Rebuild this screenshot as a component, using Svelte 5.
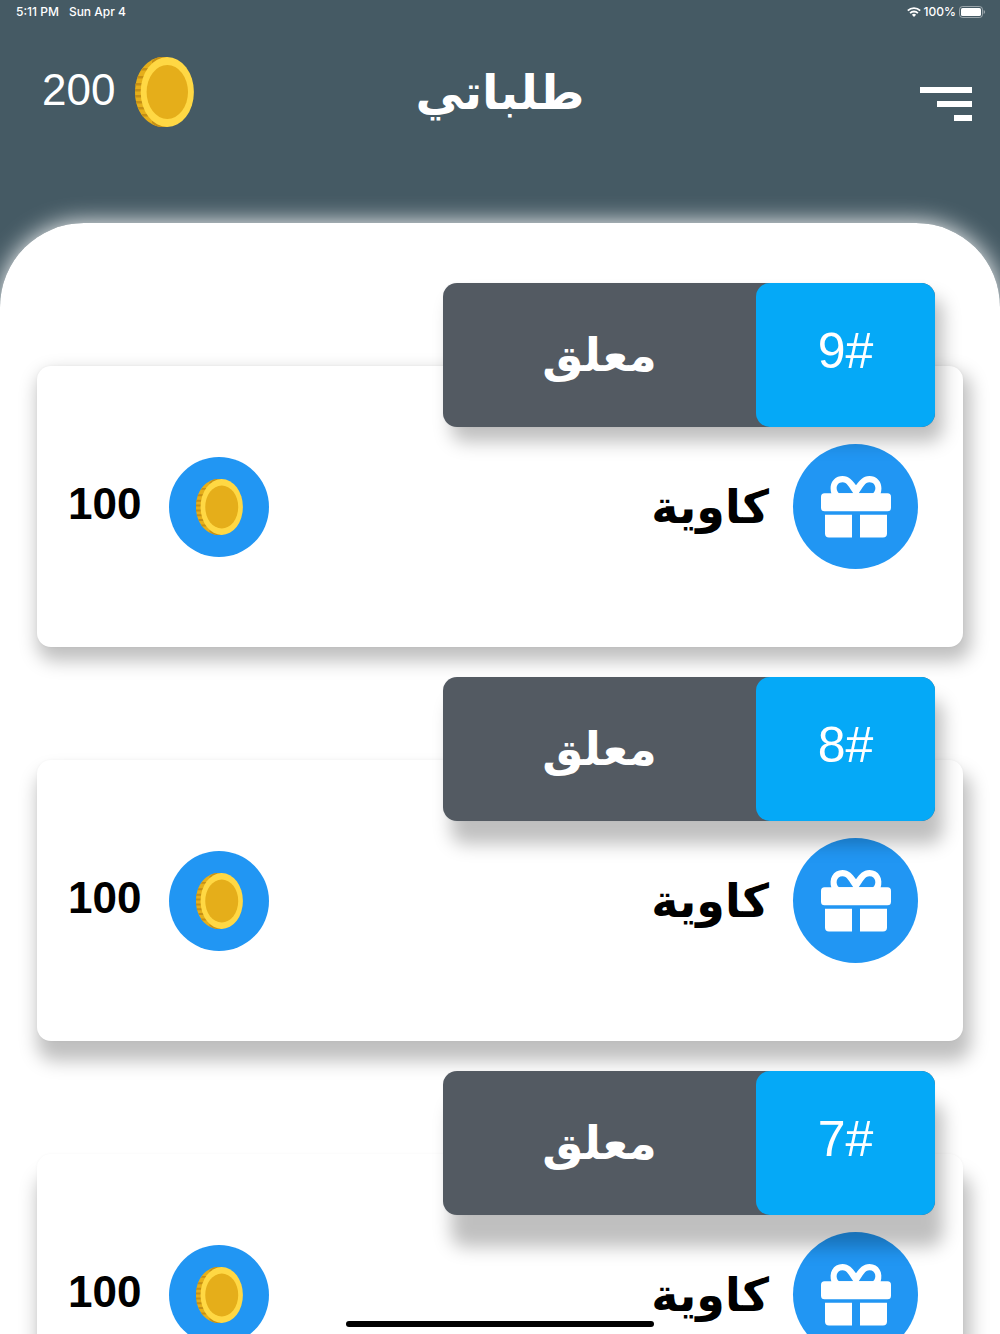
<script>
  const balance = 200;
  const orders = [
    { id: 9, status: 'معلق', item: 'كاوية', price: 100, lift: 'low' },
    { id: 8, status: 'معلق', item: 'كاوية', price: 100, lift: 'mid' },
    { id: 7, status: 'معلق', item: 'كاوية', price: 100, lift: 'high' }
  ];
</script>

{#snippet coin()}
  <svg class="coin" viewBox="0 0 59 70" aria-hidden="true">
    <path d="M32 0H26C11 2 0 16 0 35s11 33 26 35h6z" fill="#e5ae1a" />
    <path
      d="M17 4Q21 0 26 0H32L17 8zM17 66Q21 70 26 70H32L17 62zM8 11H15V13.500H6zM3 19H11V21.500H2zM1 26H8V28.500H0zM0 32H7V34.500H0zM0 38H7V40.500H0zM1 44H8V46.500H1zM3 50H11V52.500H4zM6 57H15V59.500H8z"
      fill="#c68f15"
    />
    <ellipse cx="32.300" cy="35" rx="26.600" ry="35" fill="#ffd844" />
    <ellipse cx="32.300" cy="35" rx="20.700" ry="27" fill="#e5ae1a" />
  </svg>
{/snippet}

<div class="app">
  <header>
    <div class="status-bar">
      <div class="group when"><span>5:11 PM</span><span>Sun Apr 4</span></div>
      <div class="group">
        <svg class="wifi" viewBox="0 0 14 10" aria-hidden="true">
          <g fill="none" stroke="#fff" stroke-width="1.800">
            <path d="M.8 3.700A8.800 8.800 0 0 1 13.200 3.700" />
            <path d="M3.100 6.100A5.500 5.500 0 0 1 10.900 6.100" />
          </g>
          <path d="M7 10 4.900 7.800A3 3 0 0 1 9.100 7.800z" fill="#fff" />
        </svg>
        <span>100%</span>
        <svg class="battery" viewBox="0 0 26 12" aria-hidden="true">
          <rect x=".5" y=".5" width="23" height="11" rx="3" fill="none" stroke="#fff" stroke-opacity=".45" />
          <rect x="2" y="2" width="20" height="8" rx="1.600" fill="#fff" />
          <path d="M24.700 4v4q1.300-.6 1.300-2t-1.300-2" fill="#fff" fill-opacity=".5" />
        </svg>
      </div>
    </div>
    <div class="title-bar">
      <div class="balance"><span>{balance}</span>{@render coin()}</div>
      <h1 lang="ar" dir="rtl">طلباتي</h1>
      <button class="menu" aria-label="القائمة"><i></i><i></i><i></i></button>
    </div>
  </header>

  <main>
    <ul>
      {#each orders as order (order.id)}
        <li class={order.lift}>
          <div class="tag">
            <span class="state" lang="ar" dir="rtl">{order.status}</span>
            <span class="number">{order.id}#</span>
          </div>
          <article>
            <div class="price">
              <span>{order.price}</span>
              <div class="disc small">{@render coin()}</div>
            </div>
            <div class="item">
              <span lang="ar" dir="rtl">{order.item}</span>
              <div class="disc large">
                <svg class="gift" viewBox="0 0 70 62" fill="#fff" aria-hidden="true">
                  <path
                    fill-rule="evenodd"
                    d="M10.500 18C7.500 9 12 0 21.500 0C28 0 31.500 4.500 35 9.300C38.500 4.500 42 0 48.500 0C58 0 62.500 9 59.500 18zM18 17.300H32.300C28 11 26 6.200 21.500 6.200C15 6.200 14 14 18 17.300zM52 17.300H37.700C42 11 44 6.200 48.500 6.200C55 6.200 56 14 52 17.300z"
                  />
                  <rect y="17.300" width="70" height="18" rx="3.500" />
                  <path d="M4 38.700H31V61.500H8Q4 61.500 4 57.500zM39 38.700H66V57.500Q66 61.500 62 61.500H39z" />
                </svg>
              </div>
            </div>
          </article>
        </li>
      {/each}
    </ul>
  </main>
  <div class="home-indicator"></div>
</div>

<style>
  :global(body) {
    margin: 0;
    background: #455a64;
  }
  .app {
    position: relative;
    display: flex;
    flex-direction: column;
    height: 100vh;
    overflow: hidden;
    background: #455a64;
    color: #fff;
    font-family: 'Liberation Sans', 'DejaVu Sans', sans-serif;
  }
  .status-bar {
    display: flex;
    justify-content: space-between;
    align-items: center;
    height: 24px;
    padding: 0 15px 0 16px;
    font: 500 12px/24px Inter, sans-serif;
  }
  .group {
    display: flex;
    align-items: center;
    gap: 3px;
  }
  .when {
    gap: 10px;
  }
  .wifi {
    width: 14px;
    height: 10px;
  }
  .battery {
    width: 26px;
    height: 12px;
  }
  .title-bar {
    display: grid;
    grid-template-columns: 1fr auto 1fr;
    align-items: center;
    height: 136px;
    padding: 0 28px 63px;
  }
  .balance {
    display: flex;
    align-items: center;
    gap: 20px;
    padding-left: 14px;
    font-size: 44px;
    line-height: 56px;
  }
  .balance span {
    padding-bottom: 4px;
  }
  .balance .coin {
    width: 59px;
    height: 70px;
  }
  h1 {
    margin: 0;
    font: bold 48px/72px 'DejaVu Sans', sans-serif;
  }
  .menu {
    display: flex;
    flex-direction: column;
    align-items: flex-end;
    justify-self: end;
    gap: 8px;
    margin-top: 24px;
    padding: 0;
    border: 0;
    background: none;
  }
  .menu i {
    width: 52px;
    height: 6px;
    background: #fff;
  }
  .menu i:nth-child(2) {
    width: 35px;
  }
  .menu i:nth-child(3) {
    width: 18px;
  }
  main {
    flex: 1;
    min-height: 0;
    overflow-y: auto;
    scrollbar-width: none;
    border-radius: 84px 84px 0 0;
    background: #fff;
    box-shadow: 0 0 24px #fff;
  }
  ul {
    display: flex;
    flex-direction: column;
    gap: 30px;
    margin: 0;
    padding: 60px 37px 30px;
    list-style: none;
  }
  li {
    display: flex;
    flex-direction: column;
  }
  .low {
    --card-drop: 10px;
    --tag-drop: 15px;
  }
  .mid {
    --card-drop: 16px;
    --tag-drop: 23px;
  }
  .high {
    --card-drop: 24px;
    --tag-drop: 32px;
  }
  .tag {
    position: relative;
    z-index: 1;
    display: flex;
    align-self: flex-end;
    width: 492px;
    height: 144px;
    margin: 0 28px -61px 0;
    border-radius: 14px;
    background: #535a62;
    box-shadow: 8px var(--tag-drop) 18px rgba(0, 0, 0, 0.25), 0 0 3px rgba(0, 0, 0, 0.04);
  }
  .state,
  .number {
    display: flex;
    align-items: center;
    justify-content: center;
  }
  .state {
    flex: 1;
    font: bold 46px/60px 'DejaVu Sans', sans-serif;
  }
  .number {
    width: 179px;
    padding-bottom: 8px;
    box-sizing: border-box;
    border-radius: 14px;
    background: #05a9f7;
    font-size: 50px;
  }
  article {
    display: flex;
    align-items: center;
    justify-content: space-between;
    box-sizing: border-box;
    height: 281px;
    padding: 0 45px 0 31px;
    border-radius: 14px;
    background: #fff;
    box-shadow: 4px var(--card-drop) 18px 4px rgba(0, 0, 0, 0.25), 0 0 3px rgba(0, 0, 0, 0.04);
    color: #000;
  }
  .price,
  .item {
    display: flex;
    align-items: center;
    font-weight: bold;
    font-size: 44px;
    line-height: 60px;
  }
  .price {
    gap: 28px;
  }
  .price span {
    padding-bottom: 6px;
  }
  .item {
    gap: 24px;
    font-family: 'DejaVu Sans', sans-serif;
    font-size: 46px;
  }
  .disc {
    display: grid;
    place-items: center;
    border-radius: 50%;
    background: #2196f3;
  }
  .small {
    width: 100px;
    height: 100px;
  }
  .large {
    width: 125px;
    height: 125px;
  }
  .small .coin {
    width: 47px;
    height: 56px;
  }
  .gift {
    width: 70px;
    height: 62px;
  }
  .home-indicator {
    position: absolute;
    z-index: 2;
    bottom: 7px;
    left: 50%;
    width: 308px;
    height: 6px;
    margin-left: -154px;
    border-radius: 3px;
    background: #000;
  }
</style>
